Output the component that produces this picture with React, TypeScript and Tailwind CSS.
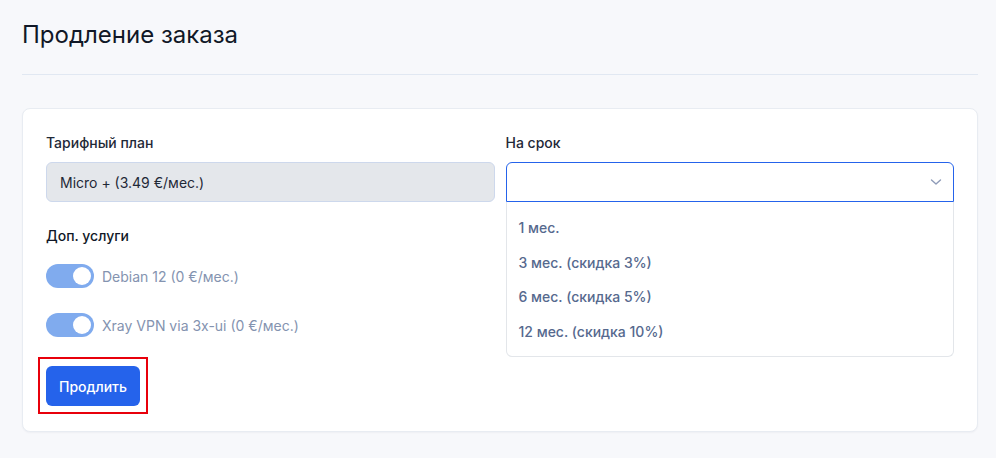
import React from "react";

function Toggle() {
  return (
    <div className="relative h-6 w-12 shrink-0 rounded-full bg-[#80abee]">
      <div className="absolute right-[3px] top-[3px] h-[18px] w-[18px] rounded-full bg-white" />
    </div>
  );
}

export default function App() {
  const options = ["1 мес.", "3 мес. (скидка 3%)", "6 мес. (скидка 5%)", "12 мес. (скидка 10%)"];
  return (
    <div className="min-h-[458px] bg-[#f7f8fb] pl-[22px] pr-[18px] pt-[19px] text-[14px] text-[#1f2937]" style={{ fontFamily: 'Inter, "Liberation Sans", Arial, sans-serif' }}>
      <h1 className="border-b border-[#e1e8f2] pb-[23px] text-[24px] leading-8 font-normal text-[#111827]">Продление заказа</h1>
      <div className="mt-[33px] rounded-lg border border-[#e8ecf2] bg-white px-[23px] pt-6 pb-[25px] shadow-[0_1px_2px_rgba(15,23,42,0.04)]">
        <div className="grid grid-cols-2 gap-x-[11px]">
          <div className="flex flex-col">
            <div className="h-5 leading-5 font-medium text-[#1f2937]">Тарифный план</div>
            <div className="mt-[9px] flex h-10 items-center rounded-md border border-[#cdd8ec] bg-[#e4e7eb] px-[13px] text-[#1f2937]">
              Micro + (3.49 €/мес.)
            </div>
            <div className="mt-6 h-5 leading-5 font-medium text-[#111827]">Доп. услуги</div>
            <div className="mt-[18px] flex flex-col gap-[25px]">
              <div className="flex h-6 items-center gap-2">
                <Toggle />
                <span className="text-[#8493b0]">Debian 12 (0 €/мес.)</span>
              </div>
              <div className="flex h-6 items-center gap-2">
                <Toggle />
                <span className="text-[#8493b0]">Xray VPN via 3x-ui (0 €/мес.)</span>
              </div>
            </div>
            <div className="mt-[29px] flex">
              <div className="relative">
                <button className="h-10 rounded-md bg-[#2563eb] px-[13px] font-medium text-white">
                  Продлить
                </button>
                <div className="pointer-events-none absolute -bottom-2 -left-2 -right-2 -top-[9px] border-2 border-[#e8000b]" />
              </div>
            </div>
          </div>
          <div className="flex flex-col">
            <div className="h-5 leading-5 font-medium text-[#1f2937]">На срок</div>
            <div className="relative mt-[9px]">
              <div className="flex h-10 items-center justify-end rounded-t-md border border-[#2563eb] bg-white pr-[11px]">
                <svg width="12" height="8" viewBox="0 0 12 8" fill="none">
                  <path d="M1.5 2l4.5 4 4.5-4" stroke="#8e9bb8" strokeWidth="1.4" strokeLinecap="round" strokeLinejoin="round" />
                </svg>
              </div>
              <div className="absolute left-0 right-0 top-10 z-10 flex h-[155px] flex-col rounded-b-md border border-t-0 border-[#e3e6ea] bg-white px-[12px] pt-[16px]">
                {options.map((o) => (
                  <div key={o} className="h-[34.5px] leading-5 font-medium text-[#56698e]">{o}</div>
                ))}
              </div>
            </div>
          </div>
        </div>
      </div>
    </div>
  );
}
